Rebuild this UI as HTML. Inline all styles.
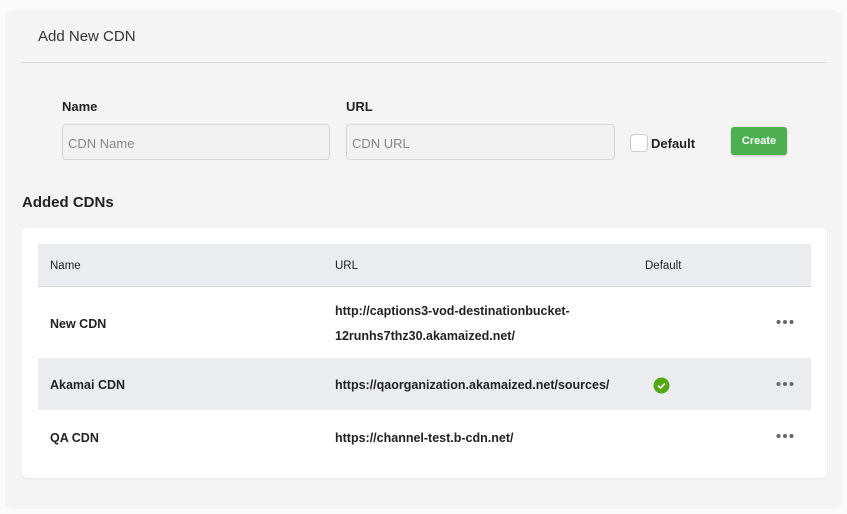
<!DOCTYPE html>
<html><head><style>
*{box-sizing:border-box;margin:0;padding:0}
body{width:847px;height:514px;background:#fafafa;font-family:"Liberation Sans",sans-serif;color:#222;position:relative;overflow:hidden}
.a{position:absolute}
.panel{left:5px;top:10px;width:837px;height:499px;background:#f4f4f4;border-radius:8px}
.inp{background:#f2f2f2;border:1px solid #d6d6d6;border-radius:4px;height:36px;font-size:13px;color:#888;padding:11px 5px}
.b{font-weight:bold}
.t{font-size:12.5px;font-weight:bold;color:#222}
</style></head><body>
<div class="a panel"></div>
<div class="a" style="left:38px;top:28px;font-size:15px;color:#333">Add New CDN</div>
<div class="a" style="left:22px;top:62px;width:805px;height:1px;background:#d9d9d9"></div>
<div class="a b" style="left:62px;top:99px;font-size:13px">Name</div>
<div class="a b" style="left:346px;top:99px;font-size:13px">URL</div>
<div class="a inp" style="left:62px;top:124px;width:268px">CDN Name</div>
<div class="a inp" style="left:346px;top:124px;width:269px">CDN URL</div>
<div class="a" style="left:630px;top:134px;width:18px;height:18px;background:#fff;border:1px solid #ccc;border-radius:4px"></div>
<div class="a b" style="left:651px;top:136px;font-size:13px">Default</div>
<div class="a" style="left:731px;top:127px;width:56px;height:28px;background:#4caf50;border-radius:3px;color:#fff;font-size:11px;font-weight:bold;text-align:center;line-height:28px;box-shadow:0 1px 2px rgba(0,0,0,.2)">Create</div>
<div class="a b" style="left:22px;top:194px;font-size:15px">Added CDNs</div>
<div class="a" style="left:22px;top:228px;width:805px;height:250px;background:#fff;border-radius:5px;box-shadow:0 1px 2px rgba(0,0,0,.06)"></div>
<div class="a" style="left:38px;top:244px;width:773px;height:43px;background:#ebecef;border-bottom:1px solid #d4d4d8"></div>
<div class="a" style="left:50px;top:260px;font-size:11.5px">Name</div>
<div class="a" style="left:335px;top:260px;font-size:11.5px">URL</div>
<div class="a" style="left:645px;top:260px;font-size:11.5px">Default</div>
<div class="a" style="left:38px;top:358px;width:773px;height:52px;background:#ebecef"></div>
<div class="a t" style="left:50px;top:317px">New CDN</div>
<div class="a t" style="left:335px;top:299px;line-height:25px">http://captions3-vod-destinationbucket-<br>12runhs7thz30.akamaized.net/</div>
<div class="a t" style="left:50px;top:378px">Akamai CDN</div>
<div class="a t" style="left:335px;top:378px">https://qaorganization.akamaized.net/sources/</div>
<div class="a t" style="left:50px;top:431px">QA CDN</div>
<div class="a t" style="left:335px;top:431px">https://channel-test.b-cdn.net/</div>
<svg class="a" style="left:653px;top:377px" width="17" height="17" viewBox="0 0 17 17"><circle cx="8.5" cy="8.5" r="8" fill="#52a810"/><path d="M5 8.7l2.4 2.3 4.6-4.6" stroke="#fff" stroke-width="1.6" fill="none"/></svg>
<svg class="a" style="left:776px;top:319px" width="18" height="6"><circle cx="2.5" cy="3" r="2" fill="#666"/><circle cx="9" cy="3" r="2" fill="#666"/><circle cx="15.5" cy="3" r="2" fill="#666"/></svg>
<svg class="a" style="left:776px;top:381px" width="18" height="6"><circle cx="2.5" cy="3" r="2" fill="#666"/><circle cx="9" cy="3" r="2" fill="#666"/><circle cx="15.5" cy="3" r="2" fill="#666"/></svg>
<svg class="a" style="left:776px;top:433px" width="18" height="6"><circle cx="2.5" cy="3" r="2" fill="#666"/><circle cx="9" cy="3" r="2" fill="#666"/><circle cx="15.5" cy="3" r="2" fill="#666"/></svg>
</body></html>
